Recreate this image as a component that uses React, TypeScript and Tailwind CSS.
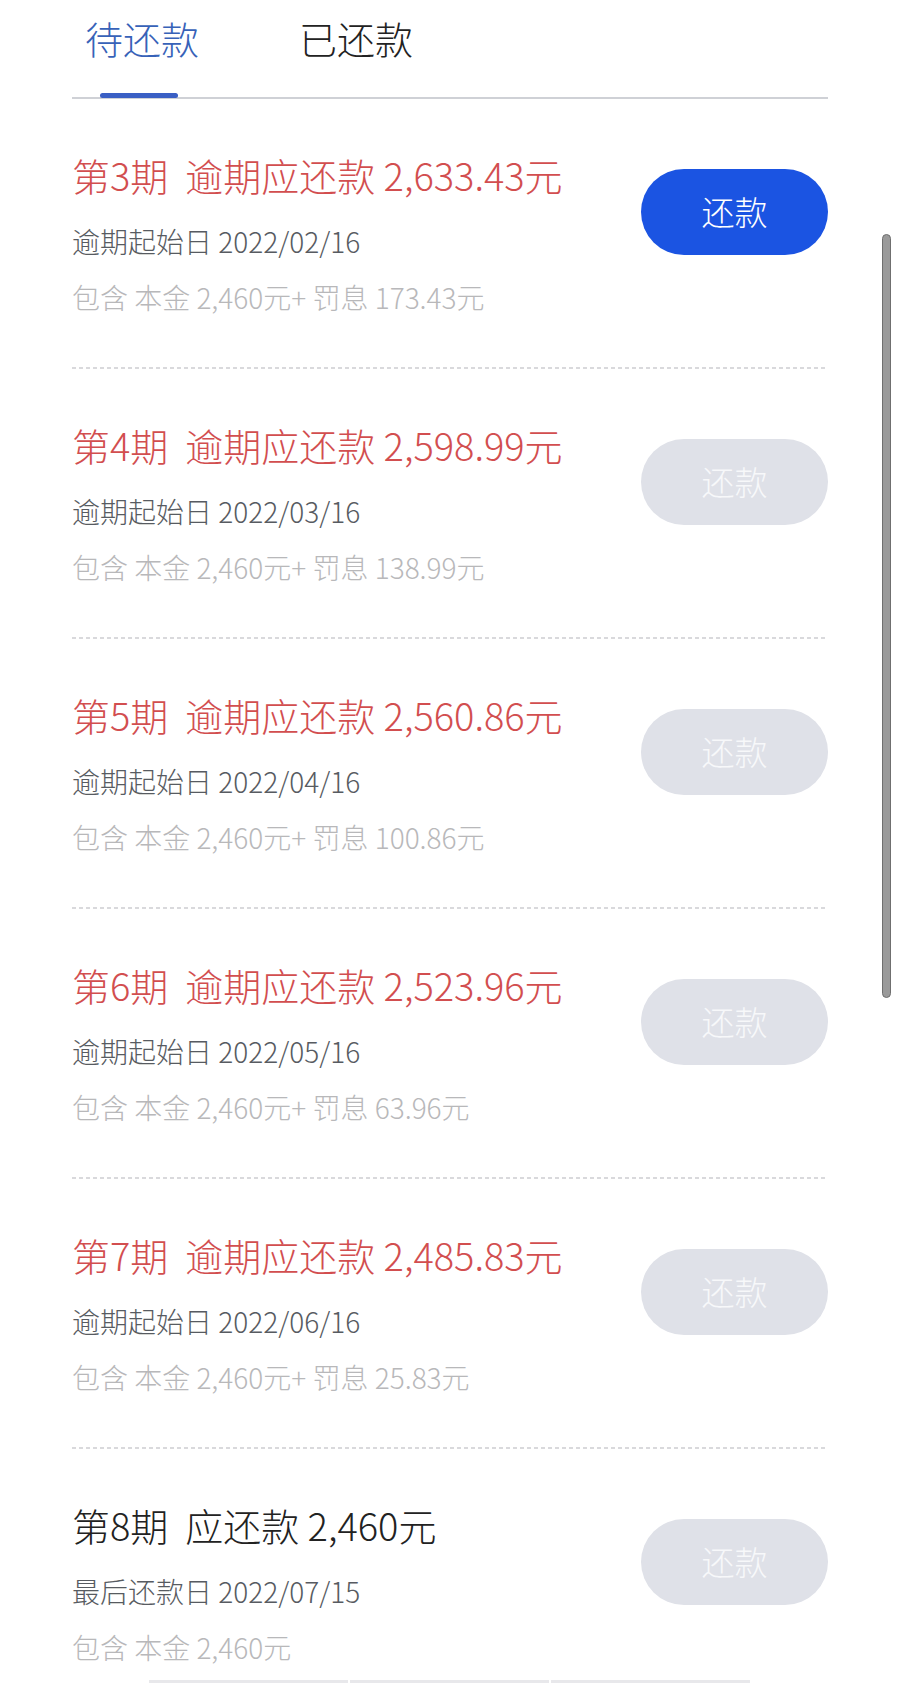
const FONT = '[font-family:"Noto_Sans_CJK_SC","Noto_Sans",sans-serif]'

type Bill = {
  period: number
  overdue: boolean
  amount: string
  date: string
  principal: string
  penalty?: string
  active?: boolean
}

const bills: Bill[] = [
  { period: 3, overdue: true, amount: '2,633.43', date: '2022/02/16', principal: '2,460', penalty: '173.43', active: true },
  { period: 4, overdue: true, amount: '2,598.99', date: '2022/03/16', principal: '2,460', penalty: '138.99' },
  { period: 5, overdue: true, amount: '2,560.86', date: '2022/04/16', principal: '2,460', penalty: '100.86' },
  { period: 6, overdue: true, amount: '2,523.96', date: '2022/05/16', principal: '2,460', penalty: '63.96' },
  { period: 7, overdue: true, amount: '2,485.83', date: '2022/06/16', principal: '2,460', penalty: '25.83' },
  { period: 8, overdue: false, amount: '2,460', date: '2022/07/15', principal: '2,460' },
]

export default function App() {
  return (
    <div className={`relative h-[1683px] w-[900px] overflow-hidden bg-white font-light ${FONT}`}>
      <div className="px-[72px]">
        {/* Tabs */}
        <div className="relative flex h-[99px] border-b-[2px] border-[#cfd1d6]">
          <div className="relative ml-[13px] pt-[13px]">
            <span className="text-[38px] leading-[50px] text-[#3762b8]">待还款</span>
            <div className="absolute left-[15px] top-[93px] h-[5px] w-[78px] rounded-full bg-[#3a5fc4]" />
          </div>
          <div className="ml-[100px] pt-[13px]">
            <span className="text-[38px] leading-[50px] text-[#222]">已还款</span>
          </div>
        </div>

        {bills.map((b, i) => (
          <div key={b.period}>
            <div className={`flex items-start justify-between pt-[54px] ${i === bills.length - 1 ? 'pb-0' : 'pb-[50px]'}`}>
              <div className="flex flex-col">
                <div className={`text-[38px] leading-[44px] ${b.overdue ? 'text-[#d24e4f]' : 'text-[#222]'}`}>
                  第{b.period}期&nbsp;&nbsp;{b.overdue ? '逾期应还款' : '应还款'} {b.amount}元
                </div>
                <div className="mt-[24px] text-[28px] leading-[40px] text-[#575b61]">
                  {b.overdue ? '逾期起始日' : '最后还款日'} {b.date}
                </div>
                <div className="mt-[16px] text-[28px] leading-[40px] text-[#b8b8ba]">
                  包含 本金 {b.principal}元{b.penalty && `+ 罚息 ${b.penalty}元`}
                </div>
              </div>
              <button
                className={`mt-[16px] flex h-[86px] w-[187px] items-center justify-center rounded-full text-[33px] ${
                  b.active ? 'bg-[#1b54e2] text-white' : 'bg-[#dfe1e8] text-[#f7f8fa]'
                }`}
              >
                还款
              </button>
            </div>
            {i < bills.length - 1 && (
              <div className="h-[2px] bg-[linear-gradient(to_right,#d9d9dc_60%,transparent_0)] bg-[length:7px_2px]" />
            )}
          </div>
        ))}

        {/* bottom bar peeking in */}
        <div className="ml-[77px] mt-[13px] flex h-[10px] w-[601px] gap-[2px]">
          <div className="flex-1 bg-[#e8e8eb]" />
          <div className="flex-1 bg-[#e8e8eb]" />
          <div className="flex-1 bg-[#e8e8eb]" />
        </div>
      </div>

      {/* scrollbar */}
      <div className="absolute left-[882px] top-[234px] h-[764px] w-[9px] rounded-full border border-[#6f6f6f] bg-[#9a9a9a]" />
    </div>
  )
}
